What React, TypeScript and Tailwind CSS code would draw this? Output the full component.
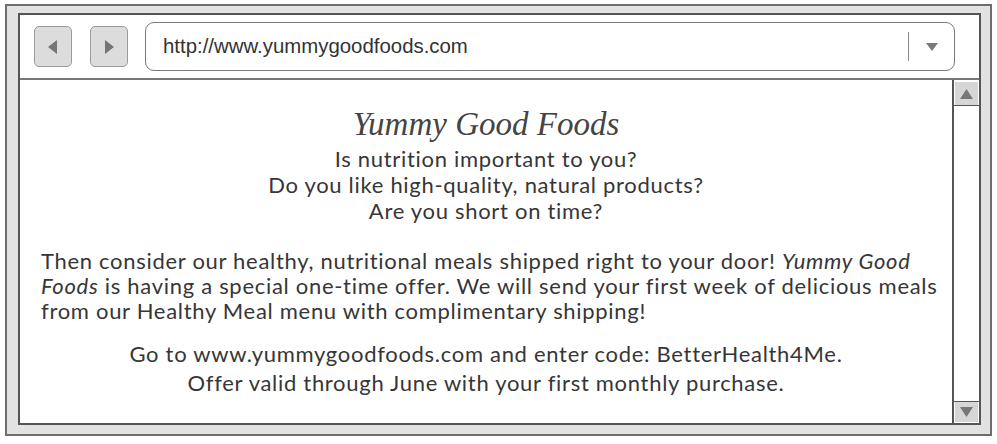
export default function App() {
  const body = { fontFamily: "Lato, 'Open Sans', sans-serif" }

  return (
    <div className="h-[444px] w-[997px] bg-white pl-[5px] pt-[4px]">
      <div className="flex h-[432px] w-[987px] flex-col border-2 border-[#6e6e6e] bg-[#e2e2e2] pb-[9px] pl-[11px] pr-[9px] pt-[7px]">
        <div className="flex min-h-0 flex-1 flex-col border-2 border-[#555] bg-white">
          {/* toolbar */}
          <div className="flex h-[65px] shrink-0 items-center border-b-2 border-[#777] pl-[14px] pr-[24px]">
            <button
              type="button"
              className="flex h-[41px] w-[38px] items-center justify-center rounded-[5px] border border-[#9a9a9a] bg-[#dcdcdc]"
            >
              <svg width="10" height="14" viewBox="0 0 10 14">
                <path d="M9 0 L0 7 L9 14 Z" fill="#757575" />
              </svg>
            </button>
            <button
              type="button"
              className="ml-[18px] flex h-[41px] w-[38px] items-center justify-center rounded-[5px] border border-[#9a9a9a] bg-[#dcdcdc]"
            >
              <svg width="10" height="14" viewBox="0 0 10 14">
                <path d="M1 0 L10 7 L1 14 Z" fill="#757575" />
              </svg>
            </button>
            <div className="ml-[17px] flex h-[49px] flex-1 items-center rounded-[9px] border-[1.5px] border-[#7a7a7a] bg-white pl-[17px]">
              <span
                className="flex-1 text-[20.4px] leading-none text-[#333]"
                style={{ fontFamily: "'Liberation Sans', Arial, sans-serif" }}
              >
                http://www.yummygoodfoods.com
              </span>
              <div className="h-[29px] w-px bg-[#8a8a8a]" />
              <div className="flex w-[45px] justify-center">
                <svg width="12" height="8" viewBox="0 0 12 8">
                  <path d="M0 0 L12 0 L6 8 Z" fill="#7a7a7a" />
                </svg>
              </div>
            </div>
          </div>

          {/* page content */}
          <div className="flex min-h-0 flex-1">
            <div className="flex-1 pt-[26px] tracking-[0.7px] text-[#363636]" style={body}>
              <h1
                className="text-center text-[33px] italic leading-[36px] tracking-normal text-[#444]"
                style={{ fontFamily: "'Liberation Serif', 'DejaVu Serif', serif" }}
              >
                Yummy Good Foods
              </h1>
              <div className="mt-[4px] text-center text-[22px] leading-[26px]">
                <p>Is nutrition important to you?</p>
                <p>Do you like high-quality, natural products?</p>
                <p>Are you short on time?</p>
              </div>
              <p className="mt-[24px] pl-[21px] text-[22px] leading-[25px]">
                Then consider our healthy, nutritional meals shipped right to your door!{" "}
                <em>Yummy Good</em>
                <br />
                <em>Foods</em> is having a special one-time offer. We will send your first week of delicious meals
                <br />
                from our Healthy Meal menu with complimentary shipping!
              </p>
              <div className="mt-[16px] text-center text-[22px] leading-[29px]">
                <p>Go to www.yummygoodfoods.com and enter code: BetterHealth4Me.</p>
                <p>Offer valid through June with your first monthly purchase.</p>
              </div>
            </div>

            {/* scrollbar */}
            <div className="flex w-[27px] shrink-0 flex-col border-l-2 border-[#555] bg-white">
              <div className="mx-[1px] mt-[2px] flex h-[23px] items-center justify-center bg-[#d6d6d6]">
                <svg width="13" height="10" viewBox="0 0 13 10">
                  <path d="M6.5 0 L13 10 L0 10 Z" fill="#777" />
                </svg>
              </div>
              <div className="flex-1 border-y border-[#555]" />
              <div className="mx-[1px] mb-[1px] flex h-[20px] items-center justify-center bg-[#d6d6d6]">
                <svg width="13" height="10" viewBox="0 0 13 10">
                  <path d="M0 0 L13 0 L6.5 10 Z" fill="#777" />
                </svg>
              </div>
            </div>
          </div>
        </div>
      </div>
    </div>
  )
}
